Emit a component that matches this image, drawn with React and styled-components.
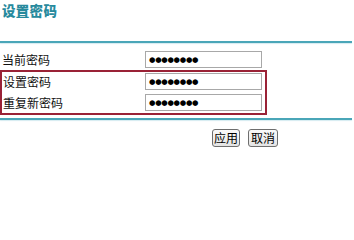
import React from "react";
import styled, { createGlobalStyle } from "styled-components";

const Global = createGlobalStyle`
  html, body { margin: 0; padding: 0; background: #fff; }
  body { font-family: "Noto Sans CJK SC", "Liberation Sans", sans-serif; }
`;

const Page = styled.div`
  width: 354px;
  height: 221px;
  overflow: hidden;
  background: #fff;
`;

const Title = styled.h1`
  margin: 0;
  padding: 2px 0 0 2px;
  height: 41px;
  box-sizing: border-box;
  font-size: 13.5px;
  line-height: 16px;
  font-weight: 900;
  color: #278a9d;
  letter-spacing: 0.3px;
`;

const Divider = styled.div`
  height: 2px;
  margin-top: ${(p) => p.$mt || 0}px;
  width: 352px;
  background: #4aa6b8;
  box-shadow: 0 1px 1px #d5ecf1;
`;

const Form = styled.div`
  display: flex;
  flex-direction: column;
`;

const Row = styled.div`
  display: flex;
  align-items: center;
  height: ${(p) => p.$h}px;
  padding-top: ${(p) => p.$pt || 0}px;
  box-sizing: border-box;
`;

const Label = styled.div`
  width: ${(p) => p.$w}px;
  padding-left: ${(p) => p.$pl}px;
  box-sizing: border-box;
  font-size: 12px;
  color: #111;
  white-space: nowrap;
`;

const Field = styled.div`
  width: 117px;
  height: 17px;
  box-sizing: border-box;
  border: 1px solid #a8a8a8;
  background: #fff;
  display: flex;
  align-items: center;
  padding-left: 3px;
  font-family: "DejaVu Sans", sans-serif;
  font-size: 7.4px;
  letter-spacing: -0.3px;
  color: #000;
`;

const Highlight = styled.div`
  width: 267px;
  box-sizing: border-box;
  border: 2px solid #9a2236;
  display: flex;
  flex-direction: column;
  gap: 2px;
  padding-bottom: 1px;
`;

const Buttons = styled.div`
  display: flex;
  gap: 8px;
  padding: 9px 0 0 212px;
`;

const Button = styled.button`
  width: ${(p) => p.$w}px;
  height: 18px;
  padding: 0;
  border: 1px solid #6e6e6e;
  border-radius: 3px;
  background: linear-gradient(#fafafa, #e4e4e4);
  font-family: "Noto Sans CJK SC", sans-serif;
  font-size: 12px;
  line-height: 14px;
  color: #000;
  box-sizing: border-box;
`;

const dots = "●●●●●●●●";

export default function App() {
  return (
    <Page>
      <Global />
      <Title>设置密码</Title>
      <Divider />
      <Form>
        <Row $h={27} $pt={5}>
          <Label $w={145} $pl={2}>当前密码</Label>
          <Field>{dots}</Field>
        </Row>
        <Highlight>
          <Row $h={19}>
            <Label $w={143} $pl={1}>设置密码</Label>
            <Field>{dots}</Field>
          </Row>
          <Row $h={19}>
            <Label $w={143} $pl={1}>重复新密码</Label>
            <Field>{dots}</Field>
          </Row>
        </Highlight>
      </Form>
      <Divider $mt={3} />
      <Buttons>
        <Button $w={28}>应用</Button>
        <Button $w={30}>取消</Button>
      </Buttons>
    </Page>
  );
}
